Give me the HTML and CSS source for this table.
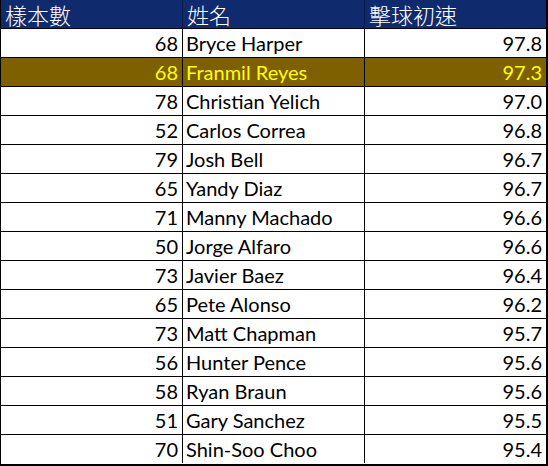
FILE: index.html
```html
<!DOCTYPE html>
<html lang="zh-Hant">
<head>
<meta charset="utf-8">
<link rel="stylesheet" href="styles.css">
</head>
<body>
<div class="sheet">
  <div class="row head">
    <div class="cell">樣本數</div>
    <div class="cell">姓名</div>
    <div class="cell">擊球初速</div>
  </div>
  <div class="row"><div class="cell num">68</div><div class="cell">Bryce Harper</div><div class="cell num">97.8</div></div>
  <div class="row hl"><div class="cell num">68</div><div class="cell">Franmil Reyes</div><div class="cell num">97.3</div></div>
  <div class="row"><div class="cell num">78</div><div class="cell">Christian Yelich</div><div class="cell num">97.0</div></div>
  <div class="row"><div class="cell num">52</div><div class="cell">Carlos Correa</div><div class="cell num">96.8</div></div>
  <div class="row"><div class="cell num">79</div><div class="cell">Josh Bell</div><div class="cell num">96.7</div></div>
  <div class="row"><div class="cell num">65</div><div class="cell">Yandy Diaz</div><div class="cell num">96.7</div></div>
  <div class="row"><div class="cell num">71</div><div class="cell">Manny Machado</div><div class="cell num">96.6</div></div>
  <div class="row"><div class="cell num">50</div><div class="cell">Jorge Alfaro</div><div class="cell num">96.6</div></div>
  <div class="row"><div class="cell num">73</div><div class="cell">Javier Baez</div><div class="cell num">96.4</div></div>
  <div class="row"><div class="cell num">65</div><div class="cell">Pete Alonso</div><div class="cell num">96.2</div></div>
  <div class="row"><div class="cell num">73</div><div class="cell">Matt Chapman</div><div class="cell num">95.7</div></div>
  <div class="row"><div class="cell num">56</div><div class="cell">Hunter Pence</div><div class="cell num">95.6</div></div>
  <div class="row"><div class="cell num">58</div><div class="cell">Ryan Braun</div><div class="cell num">95.6</div></div>
  <div class="row"><div class="cell num">51</div><div class="cell">Gary Sanchez</div><div class="cell num">95.5</div></div>
  <div class="row last"><div class="cell num">70</div><div class="cell">Shin-Soo Choo</div><div class="cell num">95.4</div></div>
</div>
</body>
</html>
```
FILE: styles.css
```css
html, body {
  margin: 0;
  padding: 0;
  background: #ffffff;
}
.sheet {
  box-sizing: border-box;
  width: 548px;
  height: 466px;
  border-left: 1px solid #000;
  border-right: 2px solid #000;
  border-bottom: 2px solid #000;
  font-family: "Lato", "Noto Sans CJK TC", sans-serif;
  font-size: 20px;
  color: #000;
}
.row {
  display: grid;
  grid-template-columns: 182px 182px 181px;
  height: 29px;
  box-sizing: border-box;
  border-bottom: 1px solid #000;
}
.row.last {
  height: 28px;
  border-bottom: none;
}
.cell {
  box-sizing: border-box;
  border-right: 1px solid #000;
  padding: 0 3px;
  line-height: 28px;
  white-space: nowrap;
}
.cell:last-child {
  border-right: none;
}
.num {
  text-align: right;
  padding-right: 4px;
}
.head {
  background: #0f2b6e;
  color: #ffffff;
}
.head .cell {
  font-family: "Noto Sans CJK TC", sans-serif;
  font-size: 22px;
  font-weight: 300;
  line-height: 28px;
  padding-left: 4px;
  border-right-color: #081a44;
}
.hl {
  background: #7f6000;
  color: #ffff00;
}
```
